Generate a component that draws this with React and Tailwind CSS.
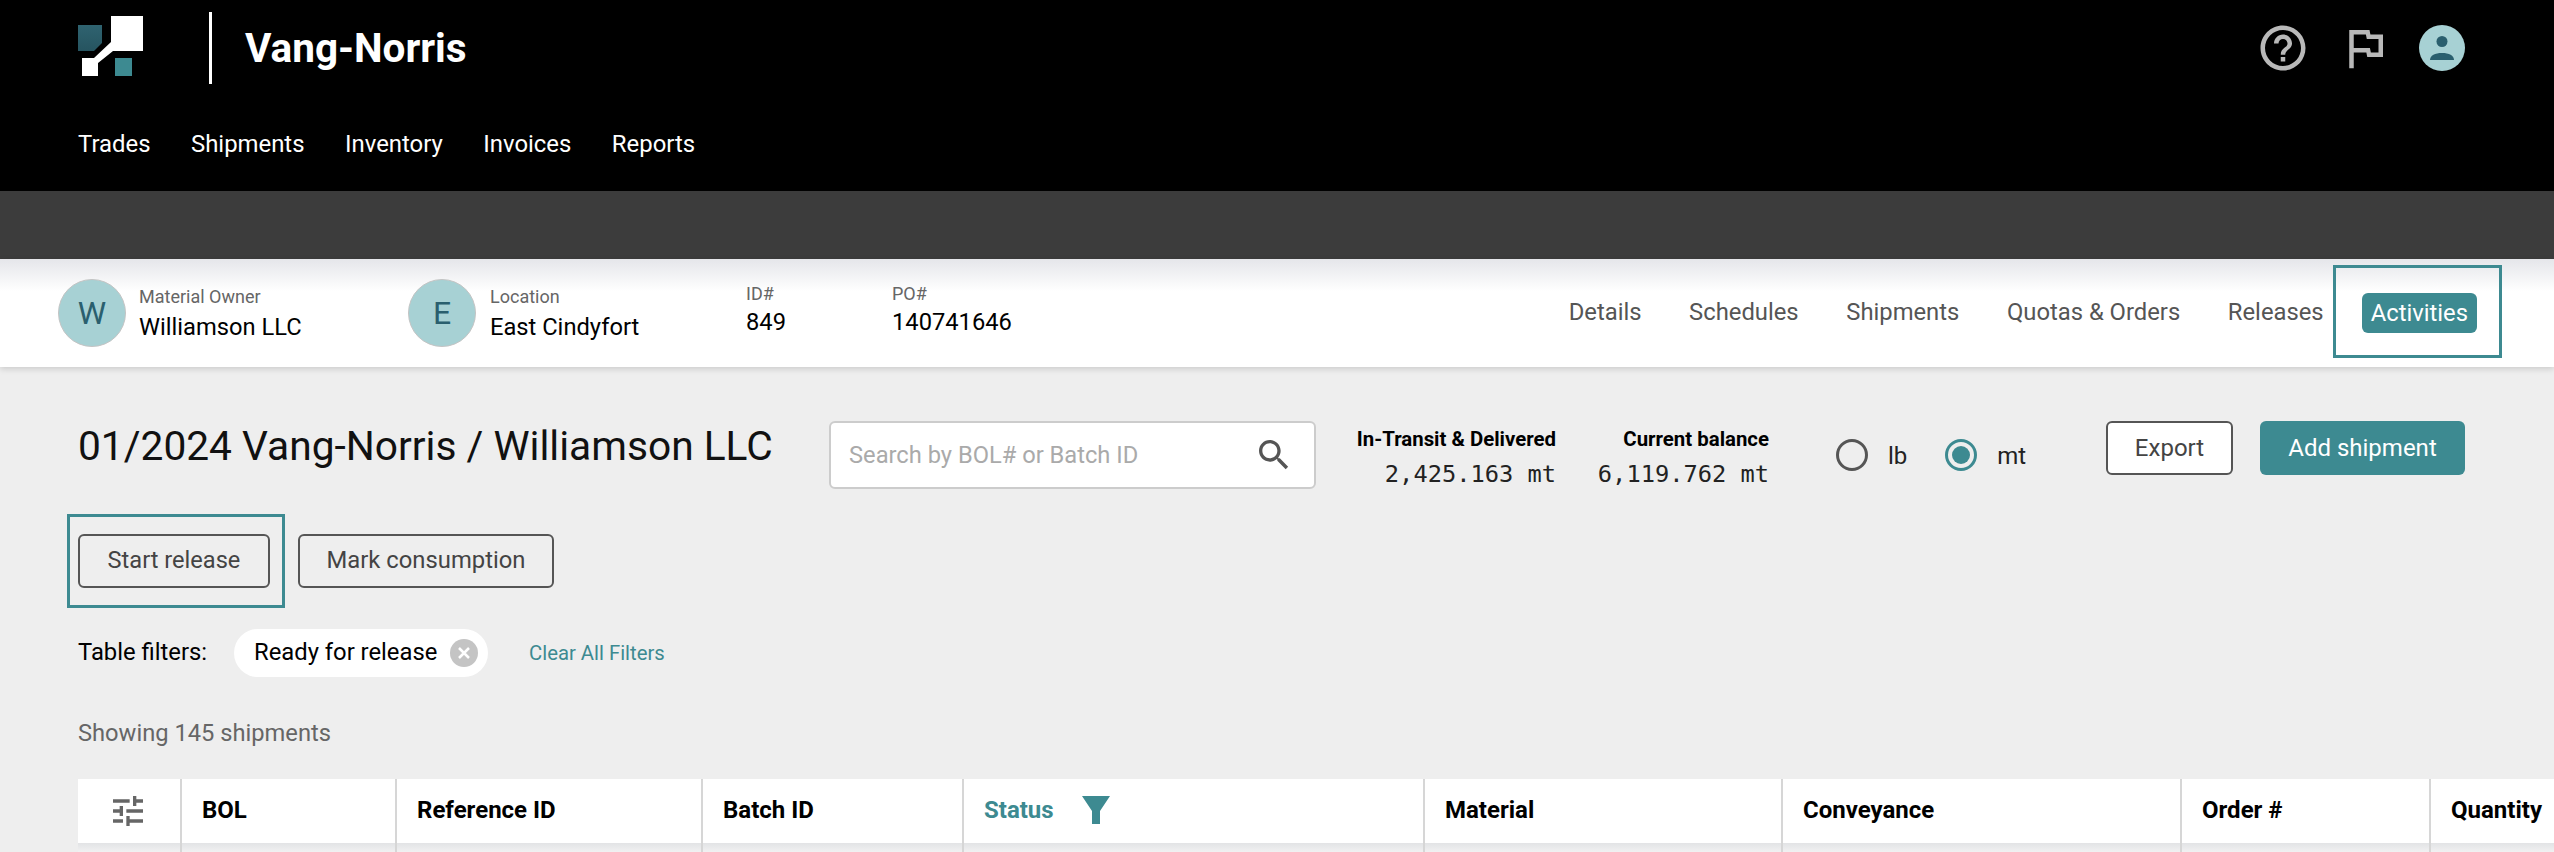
import React from "react";

const font = { fontFamily: "Roboto, sans-serif" };

const navItems = ["Trades", "Shipments", "Inventory", "Invoices", "Reports"];
const tabs = ["Details", "Schedules", "Shipments", "Quotas & Orders", "Releases"];
const columns = [
  { label: "BOL", width: "w-[215px]" },
  { label: "Reference ID", width: "w-[306px]" },
  { label: "Batch ID", width: "w-[261px]" },
  { label: "Status", width: "w-[461px]", active: true },
  { label: "Material", width: "w-[358px]" },
  { label: "Conveyance", width: "w-[399px]" },
  { label: "Order #", width: "w-[249px]" },
  { label: "Quantity", width: "w-[123px]" },
];

const Logo = () => (
  <svg width="65" height="60" viewBox="0 0 65 60">
    <defs>
      <linearGradient id="logoDark" x1="0" y1="0" x2="0" y2="1">
        <stop offset="0" stopColor="#2f6370" />
        <stop offset="1" stopColor="#265460" />
      </linearGradient>
    </defs>
    <path d="M0 9h24v18l-8 8H0z" fill="url(#logoDark)" />
    <path d="M33 0v26L16 42H4v18h16V47l15-12h30V0z" fill="#fff" />
    <path d="M37 42h17v18H37z" fill="#3d8a91" />
  </svg>
);

const Avatar = ({ letter }) => (
  <div className="flex h-[68px] w-[68px] shrink-0 items-center justify-center rounded-full border border-[#c4c4c4] bg-[#a7d1d4] text-[32px] text-[#2a5f6e]">
    {letter}
  </div>
);

const Radio = ({ label, checked }) => (
  <div className="flex items-center">
    <span
      className={`flex h-[32px] w-[32px] items-center justify-center rounded-full border-[3px] ${
        checked ? "border-[#3d8a91]" : "border-[#555]"
      }`}
    >
      {checked && <span className="h-[18px] w-[18px] rounded-full bg-[#3d8a91]" />}
    </span>
    <span className="ml-[20px] pt-[2px] text-[24px] text-[#222]">{label}</span>
  </div>
);

const App = () => {
  return (
    <div className="h-[852px] w-[2554px] overflow-hidden bg-[#eeeeee]" style={font}>
      {/* Top header */}
      <header className="h-[191px] bg-black pl-[78px] pr-[89px] text-white">
        <div className="flex h-[96px] items-center">
          <div className="mb-[4px] flex w-[131px] items-center">
            <Logo />
          </div>
          <div className="h-[72px] w-[3px] bg-white" />
          <h1 className="ml-[33px] text-[40.5px] font-bold">Vang-Norris</h1>
          <div className="ml-auto flex items-center text-[#b9b9b9]">
            <svg width="54" height="54" viewBox="0 0 24 24" fill="currentColor">
              <path d="M11 18h2v-2h-2v2zm1-16C6.48 2 2 6.48 2 12s4.48 10 10 10 10-4.48 10-10S17.52 2 12 2zm0 18c-4.41 0-8-3.59-8-8s3.59-8 8-8 8 3.59 8 8-3.59 8-8 8zm0-14c-2.21 0-4 1.79-4 4h2c0-1.1.9-2 2-2s2 .9 2 2c0 2-3 1.75-3 5h2c0-2.25 3-2.5 3-5 0-2.21-1.79-4-4-4z" />
            </svg>
            <svg className="ml-[28px]" width="54" height="54" viewBox="0 0 24 24" fill="currentColor">
              <path d="M14.4 6L14 4H5v17h2v-7h5.6l.4 2h7V6h-5.6zM18 14h-3.4l-.4-2H7V6h5.4l.4 2H18v6z" />
            </svg>
            <div className="ml-[27px] flex h-[46px] w-[46px] items-center justify-center rounded-full bg-[#a7d1d4]">
              <svg width="24" height="24" viewBox="0 0 24 24" fill="#2a5f6e">
                <circle cx="12" cy="5.5" r="5.5" />
                <path d="M0 24c0-4.5 5-7 12-7s12 2.500 12 7z" />
              </svg>
            </div>
          </div>
        </div>
        <nav className="flex gap-[40.5px] pt-[33px] text-[23.9px] leading-[30px]">
          {navItems.map((item) => (
            <a key={item} href="#">
              {item}
            </a>
          ))}
        </nav>
      </header>

      <div className="h-[68px] bg-[#3c3c3c]" />

      {/* Contract info bar */}
      <section className="flex h-[108px] items-center bg-gradient-to-b from-[#e5e6ea] via-white via-30% to-white pl-[58px] pr-[77px] shadow-[0_2px_6px_rgba(0,0,0,0.15)]">
        <div className="flex w-[350px] items-center">
          <Avatar letter="W" />
          <div className="ml-[13px] pt-[3px]">
            <div className="text-[18px] leading-[22px] text-[#666]">Material Owner</div>
            <div className="mt-[3px] text-[23.7px] leading-[32px] text-black">Williamson LLC</div>
          </div>
        </div>
        <div className="flex w-[338px] items-center">
          <Avatar letter="E" />
          <div className="ml-[14px] pt-[3px]">
            <div className="text-[18px] leading-[22px] text-[#666]">Location</div>
            <div className="mt-[3px] text-[23.7px] leading-[32px] text-black">East Cindyfort</div>
          </div>
        </div>
        <div className="mb-[5px] w-[146px]">
          <div className="text-[18px] leading-[22px] text-[#666]">ID#</div>
          <div className="mt-[1px] text-[23.7px] leading-[32px] text-black">849</div>
        </div>
        <div className="mb-[5px]">
          <div className="text-[18px] leading-[22px] text-[#666]">PO#</div>
          <div className="mt-[1px] text-[23.7px] leading-[32px] text-black">140741646</div>
        </div>
        <div className="ml-auto flex items-center gap-[47.6px] text-[23.8px] text-[#555]">
          {tabs.map((tab) => (
            <a key={tab} href="#">
              {tab}
            </a>
          ))}
          <div className="relative -ml-[9.6px]">
            <span className="block rounded-md bg-[#3d8a91] px-[9px] py-[4px] leading-[32px] text-white">Activities</span>
            <div className="absolute -bottom-[25px] -left-[29px] -right-[25px] -top-[28px] border-[3px] border-[#3d8a91]" />
          </div>
        </div>
      </section>

      {/* Main content */}
      <main className="pl-[78px] pr-[89px]">
        <div className="mt-[54px] flex h-[68px] items-center">
          <h2 className="w-[751px] shrink-0 pb-[16px] text-[40.7px] text-[#111]">01/2024 Vang-Norris / Williamson LLC</h2>
          <div className="flex h-[68px] w-[487px] shrink-0 items-center justify-between rounded-md border-2 border-[#ccc] bg-white pl-[18px] pr-[20px] text-[23.7px] text-[#aaa]">
            <span className="pt-[2px]">Search by BOL# or Batch ID</span>
            <svg width="40" height="40" viewBox="0 0 24 24" fill="#555">
              <path d="M15.5 14h-.79l-.28-.27C15.41 12.59 16 11.11 16 9.500 16 5.910 13.090 3 9.500 3S3 5.910 3 9.500 5.910 16 9.500 16c1.610 0 3.090-.59 4.230-1.570l.27.28v.79l5 4.990L20.490 19l-4.990-5zm-6 0C7.010 14 5 11.990 5 9.500S7.010 5 9.500 5 14 7.010 14 9.500 11.990 14 9.500 14z" />
            </svg>
          </div>
          <div className="w-[240px] shrink-0 pt-[6px] text-right">
            <div className="text-[20.4px] font-bold leading-[26px] text-black">In-Transit &amp; Delivered</div>
            <div className="mt-[6px] text-[23.7px] leading-[32px] text-[#222]" style={{ fontFamily: "'DejaVu Sans Mono', monospace" }}>
              2,425.163 mt
            </div>
          </div>
          <div className="w-[213px] shrink-0 pt-[6px] text-right">
            <div className="text-[20.4px] font-bold leading-[26px] text-black">Current balance</div>
            <div className="mt-[6px] text-[23.7px] leading-[32px] text-[#222]" style={{ fontFamily: "'DejaVu Sans Mono', monospace" }}>
              6,119.762 mt
            </div>
          </div>
          <div className="ml-[67px] flex w-[270px] shrink-0 items-center gap-[38px]">
            <Radio label="lb" />
            <Radio label="mt" checked />
          </div>
          <button className="mb-[14px] box-border h-[54px] w-[127px] shrink-0 rounded-md border-2 border-[#555] bg-white text-[24px] text-[#444]">
            Export
          </button>
          <button className="mb-[14px] ml-[27px] h-[54px] w-[205px] shrink-0 rounded-md bg-[#3d8a91] text-[24px] text-white">
            Add shipment
          </button>
        </div>

        <div className="mt-[45px] flex gap-[28px]">
          <div className="relative">
            <button className="h-[54px] w-[192px] rounded-md border-2 border-[#555] text-[23.6px] text-[#444]">
              Start release
            </button>
            <div className="absolute -bottom-[20px] -left-[11px] -right-[15px] -top-[20px] border-[3px] border-[#3d8a91]" />
          </div>
          <button className="h-[54px] w-[256px] rounded-md border-2 border-[#555] text-[23.8px] text-[#444]">
            Mark consumption
          </button>
        </div>

        <div className="mt-[41px] flex h-[48px] items-center text-[23.8px] text-black">
          <span className="w-[156px]">Table filters:</span>
          <div className="flex h-[48px] w-[254px] items-center justify-between rounded-full bg-white pl-[20px] pr-[10px]">
            <span>Ready for release</span>
            <span className="flex h-[28px] w-[28px] items-center justify-center rounded-full bg-[#c4c4c4]">
              <svg width="14" height="14" viewBox="0 0 14 14" stroke="#fff" strokeWidth="2.500" fill="none">
                <path d="M2 2l10 10M12 2L2 12" />
              </svg>
            </span>
          </div>
          <a href="#" className="ml-[41px] text-[20.3px] text-[#3d8a91]">
            Clear All Filters
          </a>
        </div>

        <div className="mt-[41px] text-[23.7px] leading-[30px] text-[#666]">Showing 145 shipments</div>
      </main>

      {/* Table header */}
      <div className="ml-[78px] mt-[31px] w-[2476px]">
        <div className="flex h-[64px] bg-white">
          <div className="flex w-[104px] items-center justify-center border-r-2 border-[#d6d6d6] pr-[2px]">
            <svg width="40" height="40" viewBox="0 0 24 24" fill="#666">
              <path d="M3 17v2h6v-2H3zM3 5v2h10V5H3zm10 16v-2h8v-2h-8v-2h-2v6h2zM7 9v2H3v2h4v2h2V9H7zm14 4v-2H11v2h10zm-6-4h2V7h4V5h-4V3h-2v6z" />
            </svg>
          </div>
          {columns.map((col) => (
            <div
              key={col.label}
              className={`flex shrink-0 items-center border-r-2 border-[#d6d6d6] pb-[2px] pl-[20px] text-[24px] font-bold last:border-r-0 ${col.width} ${
                col.active ? "text-[#3d8a91]" : "text-black"
              }`}
            >
              {col.label}
              {col.active && (
                <svg className="ml-[28px]" width="28" height="28" viewBox="0 0 28 28" fill="#3d8a91">
                  <path d="M0 0h28L18 15v13h-8V15z" />
                </svg>
              )}
            </div>
          ))}
        </div>
        <div className="flex h-[9px] bg-gradient-to-b from-[#e2e3e5] to-[#f1f1f2]">
          <div className="w-[104px] border-r-2 border-[#d6d6d6]" />
          {columns.map((col) => (
            <div key={col.label} className={`shrink-0 border-r-2 border-[#d6d6d6] last:border-r-0 ${col.width}`} />
          ))}
        </div>
      </div>
    </div>
  );
};

export default App;
